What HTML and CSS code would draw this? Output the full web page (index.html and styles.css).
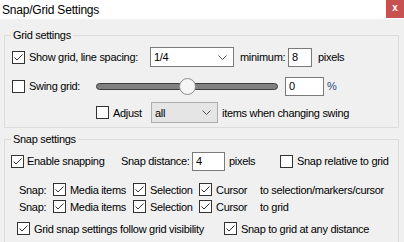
FILE: index.html
```html
<!DOCTYPE html>
<html>
<head>
    <title>Snap/Grid Settings</title>
    <link rel="stylesheet" href="styles.css">
</head>
<body>
    <div class="titlebar">
        <span class="title">Snap/Grid Settings</span>
        <span class="close">x</span>
    </div>

    <fieldset class="group grid-group">
        <legend>Grid settings</legend>

        <div class="row row-spacing">
            <label class="check show-grid">
                <span class="box"><svg width="11" height="11"><polyline points="1.5,5.5 4,8 9.5,2.5"/></svg></span>
                Show grid, line spacing:
            </label>
            <div class="select spacing-select">
                <span>1/4</span>
                <svg class="chev" width="9" height="5"><polyline points="0.5,0.5 4.5,4.5 8.5,0.5"/></svg>
            </div>
            <span class="min-label">minimum:</span>
            <div class="field min-field">8</div>
            <span class="unit">pixels</span>
        </div>

        <div class="row row-swing">
            <label class="check swing-check">
                <span class="box"></span>
                Swing grid:
            </label>
            <div class="slider">
                <div class="track"></div>
                <div class="thumb"></div>
            </div>
            <div class="field swing-field">0</div>
            <span class="unit pct">%</span>
        </div>

        <div class="row row-adjust">
            <label class="check adjust-check">
                <span class="box"></span>
                Adjust
            </label>
            <div class="select adjust-select">
                <span>all</span>
                <svg class="chev" width="9" height="5"><polyline points="0.5,0.5 4.5,4.5 8.5,0.5"/></svg>
            </div>
            <span class="unit">items when changing swing</span>
        </div>
    </fieldset>

    <fieldset class="group snap-group">
        <legend>Snap settings</legend>

        <div class="row row-enable">
            <label class="check enable-check">
                <span class="box"><svg width="11" height="11"><polyline points="1.5,5.5 4,8 9.5,2.5"/></svg></span>
                Enable snapping
            </label>
            <span class="dist-label">Snap distance:</span>
            <div class="field dist-field">4</div>
            <span class="unit dist-unit">pixels</span>
            <label class="check">
                <span class="box"></span>
                Snap relative to grid
            </label>
        </div>

        <div class="row row-snap">
            <span class="snap-label">Snap:</span>
            <label class="check media-check">
                <span class="box"><svg width="11" height="11"><polyline points="1.5,5.5 4,8 9.5,2.5"/></svg></span>
                Media items
            </label>
            <label class="check sel-check">
                <span class="box"><svg width="11" height="11"><polyline points="1.5,5.5 4,8 9.5,2.5"/></svg></span>
                Selection
            </label>
            <label class="check cursor-check">
                <span class="box"><svg width="11" height="11"><polyline points="1.5,5.5 4,8 9.5,2.5"/></svg></span>
                Cursor
            </label>
            <span>to selection/markers/cursor</span>
        </div>

        <div class="row row-snap row-snap2">
            <span class="snap-label">Snap:</span>
            <label class="check media-check">
                <span class="box"><svg width="11" height="11"><polyline points="1.5,5.5 4,8 9.5,2.5"/></svg></span>
                Media items
            </label>
            <label class="check sel-check">
                <span class="box"><svg width="11" height="11"><polyline points="1.5,5.5 4,8 9.5,2.5"/></svg></span>
                Selection
            </label>
            <label class="check cursor-check">
                <span class="box"><svg width="11" height="11"><polyline points="1.5,5.5 4,8 9.5,2.5"/></svg></span>
                Cursor
            </label>
            <span>to grid</span>
        </div>

        <div class="row row-follow">
            <label class="check follow-check">
                <span class="box"><svg width="11" height="11"><polyline points="1.5,5.5 4,8 9.5,2.5"/></svg></span>
                Grid snap settings follow grid visibility
            </label>
            <label class="check">
                <span class="box"><svg width="11" height="11"><polyline points="1.5,5.5 4,8 9.5,2.5"/></svg></span>
                Snap to grid at any distance
            </label>
        </div>

        <div class="next-control"></div>
    </fieldset>
</body>
</html>
```

FILE: styles.css
```css
* {
    box-sizing: border-box;
}

body {
    margin: 0;
    font-family: "Liberation Sans", Arial, sans-serif;
    font-size: 11px;
    letter-spacing: -0.3px;
    color: #000;
    background-color: #f0f0f0;
    overflow: hidden;
}

.titlebar {
    height: 19px;
    display: flex;
    justify-content: space-between;
    align-items: flex-start;
    background-color: #fff;
}

.title {
    padding: 3px 0 0 2px;
    font-size: 12px;
    letter-spacing: -0.2px;
    line-height: 14px;
}

.close {
    width: 18px;
    height: 18px;
    line-height: 16px;
    text-align: center;
    font-weight: bold;
    font-size: 10px;
    letter-spacing: 0;
    color: #fff;
    background-color: #c75050;
}

.group {
    margin: 0 5px 0 4px;
    padding: 5px 0 4px 0;
    border: 1px solid #dcdcdc;
    min-width: 0;
}

.group legend {
    margin-left: 6px;
    padding: 0 2px;
    line-height: 14px;
}

.grid-group {
    margin-top: 9px;
}

.snap-group {
    margin-top: 4px;
    height: 114px;
}

.row {
    display: flex;
    align-items: center;
    white-space: nowrap;
}

.check {
    display: flex;
    align-items: center;
    flex: none;
}

.box {
    width: 13px;
    height: 13px;
    margin-right: 4px;
    border: 1px solid #333;
    background-color: #fff;
    display: flex;
}

.box svg polyline {
    fill: none;
    stroke: #333;
    stroke-width: 1;
}

.select {
    flex: none;
    display: flex;
    align-items: center;
    justify-content: space-between;
    padding: 0 6px 0 3px;
    border: 1px solid #7a7a7a;
    background-color: #fff;
}

.chev polyline {
    fill: none;
    stroke: #555;
    stroke-width: 1;
}

.field {
    flex: none;
    height: 19px;
    padding: 0 3px;
    line-height: 17px;
    border: 1px solid #7a7a7a;
    background-color: #fff;
}

/* grid settings */

.row-spacing {
    height: 20px;
    padding-left: 7px;
}

.show-grid {
    width: 138px;
}

.spacing-select {
    width: 84px;
    height: 20px;
}

.min-label {
    width: 54px;
    padding-left: 6px;
}

.min-field {
    width: 24px;
}

.unit {
    margin-left: 6px;
}

.row-swing {
    height: 20px;
    margin-top: 9px;
    padding-left: 7px;
}

.swing-check {
    width: 84px;
}

.slider {
    position: relative;
    width: 182px;
    height: 20px;
    display: flex;
    align-items: center;
}

.track {
    width: 100%;
    height: 7px;
    border: 1px solid #3d3d3d;
    border-radius: 4px;
    background-color: #808080;
}

.thumb {
    position: absolute;
    left: 83px;
    top: 2px;
    width: 17px;
    height: 17px;
    border: 1px solid #8a8a8a;
    border-radius: 50%;
    background-color: #f5f5f5;
}

.swing-field {
    width: 39px;
    margin-left: 7px;
}

.pct {
    margin-left: 3px;
    color: #2e4a78;
}

.row-adjust {
    height: 21px;
    margin-top: 6px;
    padding-left: 91px;
}

.adjust-check {
    width: 55px;
}

.adjust-select {
    width: 67px;
    height: 21px;
    border-color: #adadad;
    background-color: #e5e5e5;
}

.row-adjust .unit {
    margin-left: 4px;
}

/* snap settings */

.row-enable {
    height: 20px;
    padding-left: 6px;
}

.enable-check {
    width: 110px;
}

.enable-check .box {
    margin-right: 3px;
}

.dist-label {
    width: 71px;
}

.dist-field {
    width: 33px;
}

.dist-unit {
    width: 51px;
    margin-left: 4px;
}

.row-snap {
    height: 17px;
    margin-top: 10px;
    padding-left: 14px;
}

.row-snap2 {
    margin-top: 0;
}

.snap-label {
    width: 34px;
}

.media-check {
    width: 80px;
}

.sel-check {
    width: 66px;
}

.cursor-check {
    width: 61px;
}

.row-follow {
    height: 17px;
    margin-top: 5px;
    padding-left: 12px;
}

.follow-check {
    width: 207px;
}

/* top edge of the control below, cut off by the window */
.next-control {
    width: 86px;
    height: 10px;
    margin: 5px 0 0 115px;
    border: 1px solid #d4d4d4;
    background-color: #e9e9e9;
}
```
